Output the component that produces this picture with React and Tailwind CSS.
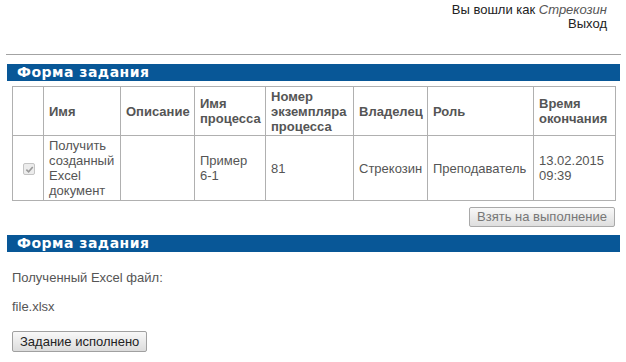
export default function App() {
  const cols = [31, 77, 74, 71, 88, 74, 106, 82];
  const heads = [
    "",
    "Имя",
    "Описание",
    <>Имя<br />процесса</>,
    <>Номер<br />экземпляра<br />процесса</>,
    "Владелец",
    "Роль",
    <>Время<br />окончания</>,
  ];

  const Bar = ({ children }) => (
    <div className="ml-[7px] mr-[6px] h-[17px] bg-[#085797] pl-[10px] text-[14px] leading-[17px] tracking-[0.5px] font-bold text-white font-['DejaVu_Sans',sans-serif]">
      {children}
    </div>
  );

  return (
    <div className="w-[626px] h-[362px] bg-white font-['Liberation_Sans',Arial,sans-serif] text-[13px] text-[#555] overflow-hidden">
      {/* шапка */}
      <div className="pt-[3px] pr-[19px] text-right leading-[14px] text-[#222]">
        <div>
          Вы вошли как <i className="text-[#555]">Стрекозин</i>
        </div>
        <div>Выход</div>
      </div>

      <div className="mt-[23px] ml-[6px] mr-[5px] border-t border-[#a3a3a3]" />

      <div className="mt-[9px]">
        <Bar>Форма задания</Bar>
      </div>

      <table className="mt-[5px] ml-[12px] table-fixed border-collapse w-[603px]">
        <colgroup>
          {cols.map((w, i) => (
            <col key={i} style={{ width: w }} />
          ))}
        </colgroup>
        <thead>
          <tr className="h-[49px]">
            {heads.map((h, i) => (
              <th
                key={i}
                className="border border-[#b0b0b0] px-[5px] py-[1px] text-left align-middle font-bold leading-[15px] text-[#555]"
              >
                {h}
              </th>
            ))}
          </tr>
        </thead>
        <tbody>
          <tr className="h-[65px]">
            <td className="border border-[#b0b0b0] align-middle">
              <span className="ml-[10px] mt-[2px] flex h-[12px] w-[12px] items-center justify-center rounded-[2px] border border-[#c4c4c4] bg-[#ececec]">
                <svg width="9" height="9" viewBox="0 0 10 10">
                  <path d="M1.5 5.2 L4 7.6 L8.6 2.2" fill="none" stroke="#9a9a9a" strokeWidth="1.8" />
                </svg>
              </span>
            </td>
            <td className="border border-[#b0b0b0] px-[5px] align-middle leading-[15px]">
              Получить созданный Excel документ
            </td>
            <td className="border border-[#b0b0b0] px-[5px]" />
            <td className="border border-[#b0b0b0] px-[5px] align-middle leading-[15px]">
              Пример<br />6-1
            </td>
            <td className="border border-[#b0b0b0] px-[5px] align-middle leading-[15px]">81</td>
            <td className="border border-[#b0b0b0] px-[5px] align-middle leading-[15px]">Стрекозин</td>
            <td className="border border-[#b0b0b0] px-[5px] align-middle leading-[15px]">Преподаватель</td>
            <td className="border border-[#b0b0b0] px-[5px] align-middle leading-[15px]">
              13.02.2015<br />09:39
            </td>
          </tr>
        </tbody>
      </table>

      <div className="mt-[6px] mr-[11px] flex justify-end">
        <button className="h-[20px] rounded-[2px] border border-[#a9a9a9] bg-gradient-to-b from-[#f8f8f8] to-[#dedede] px-[7px] text-[13px] leading-[18px] text-[#777]">
          Взять на выполнение
        </button>
      </div>

      <div className="mt-[8px]">
        <Bar>Форма задания</Bar>
      </div>

      <div className="ml-[12px]">
        <p className="mt-[18px] leading-[15px]">Полученный Excel файл:</p>
        <p className="mt-[14px] leading-[15px]">file.xlsx</p>
        <button className="mt-[17px] h-[21px] rounded-[2px] border border-[#a0a0a0] bg-gradient-to-b from-[#f8f8f8] to-[#dcdcdc] px-[7px] text-[13px] leading-[19px] text-[#222]">
          Задание исполнено
        </button>
      </div>
    </div>
  );
}
